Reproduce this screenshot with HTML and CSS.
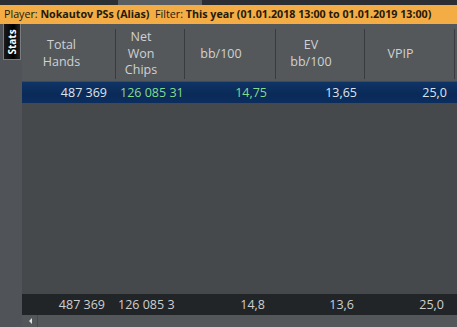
FILE: index.html
```html
<!DOCTYPE html>
<html lang="en">
<head>
  <meta charset="UTF-8" />
  <title>Player Stats</title>
  <link rel="stylesheet" href="styles.css">
</head>
<body>

  <!-- Tabs strip -->
  <div class="tabs">
    <span class="tab active"></span>
  </div>

  <!-- Filter bar -->
  <div class="filter-bar">
    Player: <b>Nokautov PSs (Alias)</b>&nbsp; Filter: <b>This year (01.01.2018 13:00 to 01.01.2019 13:00)</b>
  </div>

  <div class="wrapper">
    <!-- Side tabs -->
    <div class="side">
      <div class="side-tab"><span>Stats</span></div>
    </div>

    <!-- Grid -->
    <div class="grid">
      <div class="row head">
        <div class="cell c1"><span>Total<br>Hands</span></div>
        <div class="cell c2"><span>Net<br>Won<br>Chips</span></div>
        <div class="cell c3"><span>bb/100</span></div>
        <div class="cell c4"><span>EV<br>bb/100</span></div>
        <div class="cell c5"><span>VPIP</span></div>
      </div>

      <div class="row selected">
        <div class="cell c1">487 369</div>
        <div class="cell c2 green clip">126 085 31</div>
        <div class="cell c3 green">14,75</div>
        <div class="cell c4">13,65</div>
        <div class="cell c5">25,0</div>
      </div>

      <div class="empty"></div>

      <div class="row total">
        <div class="cell c1">487 369</div>
        <div class="cell c2 clip">126 085 3</div>
        <div class="cell c3">14,8</div>
        <div class="cell c4">13,6</div>
        <div class="cell c5">25,0</div>
      </div>

      <div class="scrollbar">
        <span class="arrow"></span>
      </div>
    </div>
  </div>

</body>
</html>
```

FILE: styles.css
```css
html, body {
  margin: 0;
  padding: 0;
  height: 100%;
  overflow: hidden;
}

body {
  display: flex;
  flex-direction: column;
  background-color: #505357;
  font-family: "Open Sans", "Noto Sans", sans-serif;
  color: #d4d6d8;
}

/* Top tabs */
.tabs {
  height: 5px;
  background-color: #2b2f33;
  display: flex;
}
.tab.active {
  margin-left: 118px;
  width: 84px;
  background-color: #5a5e61;
}

/* Filter bar */
.filter-bar {
  height: 19px;
  background-color: #f4ac45;
  color: #231a0c;
  font-size: 10.7px;
  line-height: 19px;
  padding-left: 4px;
  white-space: nowrap;
  overflow: hidden;
}
.filter-bar b {
  font-weight: 700;
}

.wrapper {
  flex: 1;
  display: flex;
  min-height: 0;
}

/* Side tabs */
.side {
  width: 22px;
  background-color: #505357;
  flex-shrink: 0;
}
.side-tab {
  margin: 0 0 0 3px;
  width: 16px;
  height: 35px;
  border: 1px solid #7b7e81;
  border-top: none;
  background: linear-gradient(to right, #1a1a1a, #000 60%, #222);
  display: flex;
  align-items: center;
  justify-content: center;
}
.side-tab span {
  transform: rotate(-90deg);
  color: #ffffff;
  font-size: 10px;
  font-weight: 700;
  white-space: nowrap;
}

/* Grid */
.grid {
  flex: 1;
  display: flex;
  flex-direction: column;
  background-color: #46494c;
}

.row {
  display: grid;
  grid-template-columns: 94px 69px 91px 89px 90px 1fr;
}

.cell {
  overflow: hidden;
  white-space: nowrap;
}

.head {
  height: 57px;
  background-color: #55585b;
  color: #cfd1d3;
  font-size: 12.5px;
  line-height: 16.5px;
  margin-bottom: 1px;
}
.head .cell {
  overflow: visible;
  display: flex;
  align-items: center;
  justify-content: center;
  text-align: center;
  margin: 5px 0 3px;
  padding-right: 18px;
  border-right: 1px solid #393c3f;
}
.head .c1 {
  padding-right: 14px;
}

.selected {
  height: 21px;
  line-height: 21px;
  font-size: 12.5px;
  color: #dfe4ec;
  background: linear-gradient(to bottom, #0f3466, #0a2a58 60%, #0c2e5e);
}
.selected .cell,
.total .cell {
  text-align: right;
  padding-right: 9px;
}
.selected .c4,
.selected .c5 {
  padding-right: 8px;
}
.green {
  color: #84dc8e;
}
.clip.cell {
  text-align: left;
  padding: 0 0 0 4px;
}

.empty {
  flex: 1;
}

.total {
  height: 21px;
  line-height: 21px;
  font-size: 12.5px;
  color: #cdcfd1;
  background-color: #222528;
}
.total .cell {
  padding-right: 11px;
}
.total .clip.cell {
  padding: 0 0 0 2px;
}

/* Horizontal scrollbar */
.scrollbar {
  height: 12px;
  background-color: #54575a;
  display: flex;
  align-items: center;
}
.arrow {
  width: 10px;
  height: 12px;
  margin-left: 5px;
  border-right: 1px solid #46494c;
  position: relative;
}
.arrow::before {
  content: "";
  position: absolute;
  left: 2px;
  top: 3px;
  border-top: 3px solid transparent;
  border-bottom: 3px solid transparent;
  border-right: 3px solid #e0e0e0;
}
```
